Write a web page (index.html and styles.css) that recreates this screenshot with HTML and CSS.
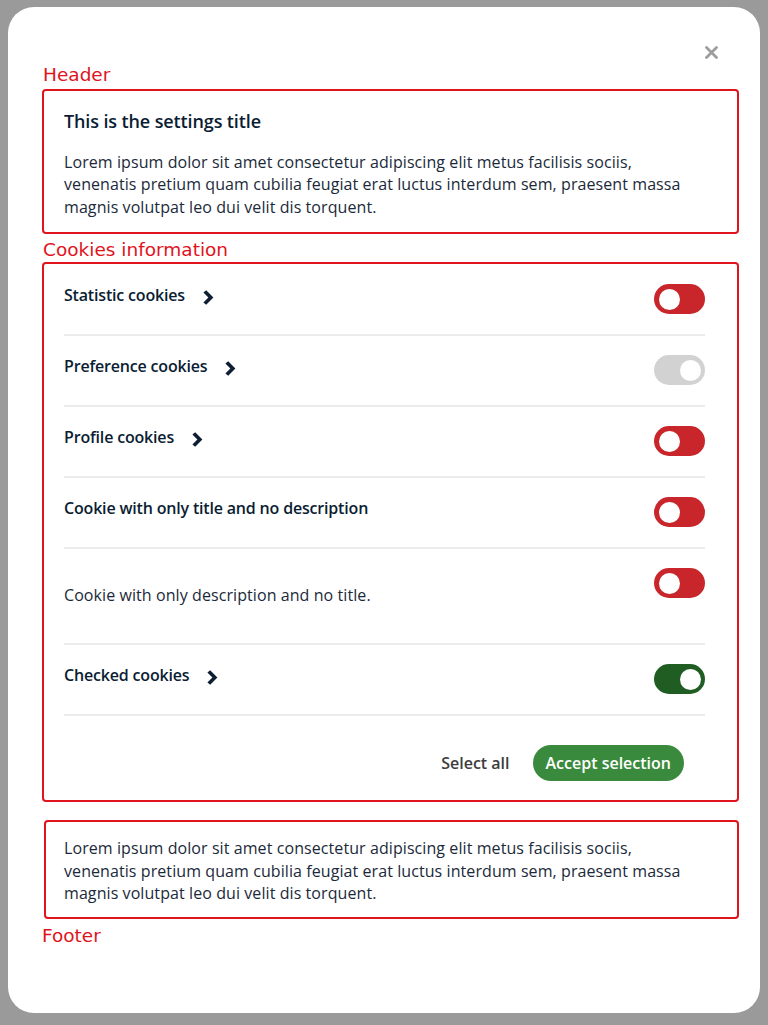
FILE: index.html
```html
<!DOCTYPE html>
<html lang="en">
<head>
<meta charset="utf-8">
<title>Cookie settings</title>
<link rel="stylesheet" href="styles.css">
</head>
<body>
<div class="modal">
  <div class="close-row">
    <button class="close" aria-label="Close">
      <svg width="13" height="13" viewBox="0 0 13 13"><path d="M1.5 1.5 L11.5 11.5 M11.5 1.5 L1.5 11.5" stroke="#9d9d9d" stroke-width="2.8" stroke-linecap="round"/></svg>
    </button>
  </div>

  <div class="label label-header">Header</div>
  <section class="box header-box">
    <h2 class="title">This is the settings title</h2>
    <p class="text">Lorem ipsum dolor sit amet consectetur adipiscing elit metus facilisis sociis, venenatis pretium quam cubilia feugiat erat luctus interdum sem, praesent massa magnis volutpat leo dui velit dis torquent.</p>
  </section>

  <div class="label label-cookies">Cookies information</div>
  <section class="box cookies-box">
    <div class="row">
      <div class="row-main"><div class="row-title">Statistic cookies <svg class="chev" width="11" height="15" viewBox="0 0 11 15"><path d="M0.4 2.4 L3.2 0.2 L10.4 7.5 L3.2 14.8 L0.4 12.6 L5.4 7.5 Z" fill="#0e1e33"/></svg></div></div>
      <span class="toggle red"><span class="knob"></span></span>
    </div>
    <div class="row">
      <div class="row-main"><div class="row-title">Preference cookies <svg class="chev" width="11" height="15" viewBox="0 0 11 15"><path d="M0.4 2.4 L3.2 0.2 L10.4 7.5 L3.2 14.8 L0.4 12.6 L5.4 7.5 Z" fill="#0e1e33"/></svg></div></div>
      <span class="toggle grey on"><span class="knob"></span></span>
    </div>
    <div class="row">
      <div class="row-main"><div class="row-title">Profile cookies <svg class="chev" width="11" height="15" viewBox="0 0 11 15"><path d="M0.4 2.4 L3.2 0.2 L10.4 7.5 L3.2 14.8 L0.4 12.6 L5.4 7.5 Z" fill="#0e1e33"/></svg></div></div>
      <span class="toggle red"><span class="knob"></span></span>
    </div>
    <div class="row">
      <div class="row-main"><div class="row-title">Cookie with only title and no description</div></div>
      <span class="toggle red"><span class="knob"></span></span>
    </div>
    <div class="row">
      <div class="row-main"><p class="row-desc">Cookie with only description and no title.</p></div>
      <span class="toggle red"><span class="knob"></span></span>
    </div>
    <div class="row">
      <div class="row-main"><div class="row-title">Checked cookies <svg class="chev" width="11" height="15" viewBox="0 0 11 15"><path d="M0.4 2.4 L3.2 0.2 L10.4 7.5 L3.2 14.8 L0.4 12.6 L5.4 7.5 Z" fill="#0e1e33"/></svg></div></div>
      <span class="toggle green on"><span class="knob"></span></span>
    </div>
    <div class="actions">
      <button class="btn-link">Select all</button>
      <button class="btn-primary">Accept selection</button>
    </div>
  </section>

  <section class="box footer-box">
    <p class="text">Lorem ipsum dolor sit amet consectetur adipiscing elit metus facilisis sociis, venenatis pretium quam cubilia feugiat erat luctus interdum sem, praesent massa magnis volutpat leo dui velit dis torquent.</p>
  </section>
  <div class="label label-footer">Footer</div>
</div>
</body>
</html>
```
FILE: styles.css
```css
* { box-sizing: border-box; }

body {
  margin: 0;
  background: #9a9a9a;
  font-family: "Open Sans", "Noto Sans", sans-serif;
  color: #1b2a3a;
}

.modal {
  margin: 7px 8px;
  height: 1006px;
  background: #ffffff;
  border-radius: 26px;
  padding: 33px 21px 0 34px;
}

.close-row {
  display: flex;
  justify-content: flex-end;
  height: 24px;
  padding-right: 21px;
}

.close {
  border: 0;
  background: none;
  padding: 0;
  width: 13px;
  height: 24px;
  display: flex;
  align-items: center;
  justify-content: center;
  cursor: pointer;
}

.label {
  font-family: "DejaVu Sans", sans-serif;
  font-size: 18.5px;
  line-height: 22px;
  color: #e0141c;
  padding-left: 1px;
}

.label-header { margin-bottom: 3px; }
.label-cookies { margin: 5px 0 1px; }
.label-footer { margin-top: 6px; padding-left: 0; }

.box {
  border: 2px solid #e0141c;
  border-radius: 4px;
}

.header-box {
  padding: 18px 44px 14px 20px;
}

.title {
  margin: 0 0 18px;
  font-size: 18px;
  line-height: 24px;
  font-weight: 600;
  letter-spacing: -0.12px;
  color: #0b1d33;
}

.text {
  margin: 0;
  font-size: 16px;
  line-height: 22.4px;
  letter-spacing: 0.08px;
  color: #1b2a3a;
}

.cookies-box {
  padding: 0 32px 0 20px;
}

.row {
  display: flex;
  align-items: flex-start;
  justify-content: space-between;
  padding: 19px 0 20px;
  border-bottom: 2px solid #ebebeb;
}

.row:first-child {
  padding-top: 20px;
}

.row-main {
  flex: 1;
}

.row-title {
  display: flex;
  align-items: center;
  gap: 18px;
  font-size: 16px;
  line-height: 22px;
  font-weight: 600;
  letter-spacing: -0.18px;
  color: #0b1d33;
}

.chev { margin-top: 4px; }

.row-desc {
  margin: 16px 0 17px;
  font-size: 16px;
  line-height: 22px;
  letter-spacing: 0.08px;
  color: #1b2a3a;
}

.toggle {
  position: relative;
  flex: none;
  width: 51px;
  height: 30px;
  border-radius: 15px;
  display: flex;
  align-items: center;
  padding: 0 4px 0 5px;
}

.toggle.on { justify-content: flex-end; }

.toggle.red { background: #c8262b; }
.toggle.grey { background: #d2d2d2; }
.toggle.green { background: #1f5d23; }

.knob {
  width: 21px;
  height: 21px;
  border-radius: 50%;
  background: #ffffff;
}

.actions {
  display: flex;
  justify-content: flex-end;
  align-items: center;
  gap: 23px;
  padding: 29px 21px 19px 0;
}

.btn-link {
  border: 0;
  background: none;
  padding: 0;
  font-family: "Open Sans", sans-serif;
  font-size: 16px;
  font-weight: 600;
  color: #3d3d3d;
  cursor: pointer;
}

.btn-primary {
  border: 0;
  height: 36px;
  padding: 0 13px;
  border-radius: 18px;
  background: #3a8a3e;
  color: #ffffff;
  font-family: "Open Sans", sans-serif;
  font-size: 16px;
  font-weight: 600;
  cursor: pointer;
}

.footer-box {
  margin: 18px 0 0 2px;
  padding: 15px 44px 13px 18px;
}
```
